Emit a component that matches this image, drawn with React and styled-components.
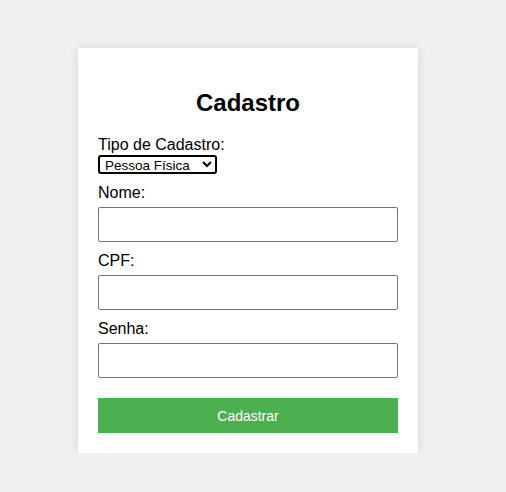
import React from "react";
import styled, { createGlobalStyle } from "styled-components";

const Global = createGlobalStyle`
  html, body { margin: 0; padding: 0; }
  body {
    background: #f0f0f0;
    font-family: Arial, "Liberation Sans", sans-serif;
    color: #000;
  }
`;

const Page = styled.div`
  padding: 48px 0 0 78px;
`;

const Card = styled.form`
  width: 340px;
  box-sizing: border-box;
  padding: 20px;
  background: #fff;
  box-shadow: 0 0 10px rgba(0, 0, 0, 0.1);
`;

const Title = styled.h2`
  margin: 21px 0 19px;
  text-align: center;
  font-size: 24px;
  line-height: 28px;
  font-weight: bold;
`;

const Label = styled.label`
  display: block;
  font-size: 16px;
  line-height: 18px;
  margin-bottom: ${(p) => (p.$tight ? "0" : "5px")};
`;

const Select = styled.select`
  display: block;
  height: 19px;
  width: 119px;
  box-sizing: border-box;
  border: 2px solid #000;
  border-radius: 3px;
  font-family: Arial, "Liberation Sans", sans-serif;
  font-size: 13.5px;
  padding: 0 1px;
  margin: 1px 0 10px;
  background: #fff;
  color: #000;
  outline: none;
`;

const Input = styled.input`
  display: block;
  width: 100%;
  height: 35px;
  box-sizing: border-box;
  border: 1px solid #767676;
  border-radius: 2px;
  padding: 8px;
  margin: 0 0 10px;
  font-size: 14px;
`;

const Button = styled.button`
  display: block;
  width: 100%;
  height: 35px;
  margin-top: 20px;
  border: none;
  background: #4caf50;
  color: #fff;
  font-family: Arial, "Liberation Sans", sans-serif;
  font-size: 14px;
  cursor: pointer;
`;

export default function App() {
  return (
    <>
      <Global />
      <Page>
        <Card onSubmit={(e) => e.preventDefault()}>
          <Title>Cadastro</Title>
          <Label $tight>Tipo de Cadastro:</Label>
          <Select defaultValue="pf">
            <option value="pf">Pessoa Física</option>
            <option value="pj">Pessoa Jurídica</option>
          </Select>
          <Label>Nome:</Label>
          <Input type="text" />
          <Label>CPF:</Label>
          <Input type="text" />
          <Label>Senha:</Label>
          <Input type="password" />
          <Button type="submit">Cadastrar</Button>
        </Card>
      </Page>
    </>
  );
}
